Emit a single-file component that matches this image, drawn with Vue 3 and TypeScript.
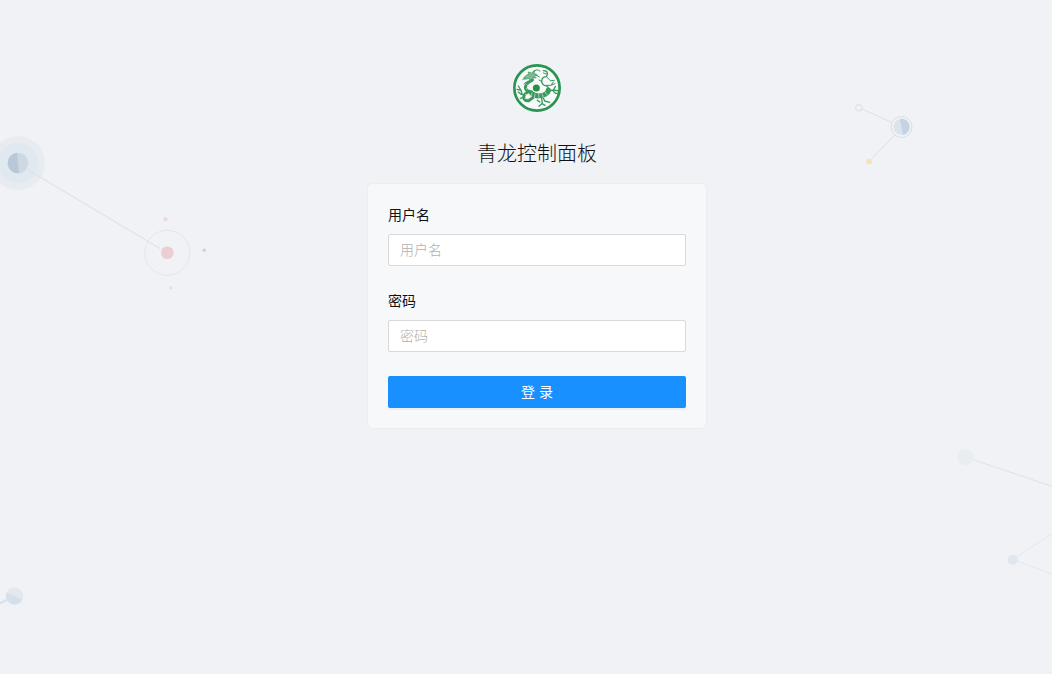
<script setup lang="ts">
import { ref } from 'vue'

const username = ref('')
const password = ref('')
</script>

<template>
  <div class="page">
    <svg class="backdrop" viewBox="0 0 1052 674" preserveAspectRatio="xMinYMin slice" fill="none" aria-hidden="true">
      <g>
        <circle cx="18" cy="163" r="27" fill="#e8ecf0" />
        <circle cx="18" cy="163" r="20" fill="#e0e8f0" />
        <circle cx="18" cy="163" r="10.3" fill="#cdd8e2" />
        <path d="M17 152.700A10.300 10.300 0 1 0 19 173.300Z" fill="#b8c8d8" />
        <path d="M26.500 169L160 248.500" stroke="#d8e0e9" />
        <circle cx="167.300" cy="252.800" r="22.500" stroke="#e3e6eb" />
        <circle cx="167.300" cy="252.800" r="6.300" fill="#ebcdd2" />
        <circle cx="165.500" cy="219.300" r="2.200" fill="#ecdade" />
        <circle cx="170.800" cy="287.700" r="1.700" fill="#eddce1" />
        <circle cx="204.200" cy="250.200" r="1.800" fill="#cad6e3" />
      </g>
      <g>
        <path d="M862 109L892 122.500M894 135.500L871 159.500" stroke="#d8e1e9" />
        <circle cx="858.800" cy="107.800" r="3.200" stroke="#d8e1e9" />
        <circle cx="901.500" cy="127" r="10.500" stroke="#d5e0e9" />
        <circle cx="901.500" cy="127" r="8" fill="#dbe3eb" />
        <path d="M900 119A8 8 0 1 1 903 135Z" fill="#c4d3e1" />
        <circle cx="869" cy="161.500" r="2.800" fill="#f6e2b6" />
      </g>
      <g>
        <circle cx="965.500" cy="457.500" r="8.300" fill="#e9edf1" />
        <path d="M974 460L1054 487" stroke="#dce3ea" />
        <path d="M1016 557L1054 532.500M1017 561L1054 575" stroke="#e3e7ec" />
        <circle cx="1012.700" cy="559.800" r="5" fill="#dfe6ee" />
      </g>
      <g>
        <path d="M-2 604L8 599.500" stroke="#d7e1ea" stroke-width="2" />
        <circle cx="14.500" cy="596" r="8.700" fill="#e2e8ef" />
        <path d="M6.500 592.600A8.700 8.700 0 0 0 22.500 599.400Z" fill="#d7e0ea" />
      </g>
    </svg>

    <main class="content">
      <header class="top">
        <svg class="logo" viewBox="18 18 144 144" fill="none" stroke="#3a9a5c" stroke-linecap="round" stroke-linejoin="round" role="img" aria-label="logo">
          <circle cx="90" cy="90" r="68" fill="#f7f9fa" stroke="#2b9450" stroke-width="8" />
          <path d="M50 59L60 50L66 49L63 42L74 45L84 36L81 46L91 51L82 54L88 60L78 59L80 67L71 71L66 61L55 64Z" fill="#7dba92" stroke-width="2" />
          <path d="M78 42Q88 30 99 39M85 50L97 57M55 60L47 65M62 70L51 77" stroke-width="3" />
          <path d="M75 67Q56 75 55 89Q57 99 69 101" stroke-width="9" />
          <path d="M67 101Q52 105 50 117Q50 129 65 128L79 118" stroke-width="9" />
          <path d="M74 105Q88 119 110 111Q124 106 124 96" stroke-width="15" />
          <path d="M124 98Q127 84 112 82Q101 76 105 64Q108 56 118 56Q125 45 117 39L109 38" stroke-width="4" />
          <circle cx="88" cy="90" r="14" fill="#f5f9f6" stroke="none" />
          <circle cx="88" cy="90" r="10.500" fill="#239149" stroke="none" />
          <path d="M52 110L42 109L34 102M45 108L42 97L30 94M42 97L34 84M48 119L40 121" stroke-width="4" />
          <path d="M124 99L139 96L157 99M137 97L145 106L154 106M139 96L145 86M108 118L113 129L128 133M104 121L106 136L96 145M105 137L114 142M91 127L99 132" stroke-width="4" />
          <path d="M117 82L132 82L139 72M134 81L144 77M105 71L96 66M119 57L130 68L142 67M118 48L109 45" stroke-width="3" />
          <path d="M59 80L66 86M58 92L69 95M55 109L67 112M54 122L64 120M75 105L72 117M84 108L82 121M95 109L96 120M105 107L109 118M115 103L121 112" stroke="#d6e9dc" stroke-width="2" />
        </svg>
        <h1 class="title">青龙控制面板</h1>
      </header>

      <form class="card" @submit.prevent>
        <div class="field">
          <label for="username">用户名</label>
          <input id="username" v-model="username" type="text" placeholder="用户名" autocomplete="username" />
        </div>
        <div class="field">
          <label for="password">密码</label>
          <input id="password" v-model="password" type="password" placeholder="密码" autocomplete="current-password" />
        </div>
        <button type="submit">登 录</button>
      </form>
    </main>
  </div>
</template>

<style>
body {
  margin: 0;
}
</style>

<style scoped>
.page {
  position: relative;
  box-sizing: border-box;
  min-height: 100vh;
  padding: 64px 0 24px 22px;
  overflow: hidden;
  background: #f0f2f5;
  color: #111;
  font-family: "Liberation Sans", "Noto Sans CJK SC", sans-serif;
  font-size: 14px;
  line-height: 22px;
}

.backdrop {
  position: absolute;
  top: 0;
  left: 0;
  width: 100%;
  height: 100%;
}

.content {
  position: relative;
  display: flex;
  flex-direction: column;
  align-items: center;
}

.top {
  display: flex;
  flex-direction: column;
  align-items: center;
  gap: 24px;
  margin-bottom: 11px;
}

.logo {
  display: block;
  width: 48px;
  height: 48px;
}

.title {
  margin: 0;
  font-size: 20px;
  font-weight: 300;
  line-height: 36px;
}

.card {
  box-sizing: border-box;
  width: 100%;
  max-width: 340px;
  padding: 20px;
  border: 1px solid #ebedef;
  border-radius: 6px;
  background: #f7f8fa;
}

.field {
  display: flex;
  flex-direction: column;
  gap: 8px;
  margin-bottom: 24px;
}

label {
  align-self: flex-start;
}

input {
  box-sizing: border-box;
  width: 100%;
  height: 32px;
  padding: 4px 11px;
  border: 1px solid #d9d9d9;
  border-radius: 2px;
  background: #fff;
  color: #222;
  font: inherit;
  font-weight: 300;
}

input::placeholder {
  color: #b0b0b0;
  opacity: 1;
}

input:focus {
  border-color: #40a9ff;
  outline: none;
}

button {
  display: block;
  width: 100%;
  height: 32px;
  padding: 4px 15px;
  border: 0;
  border-radius: 2px;
  background: #1890ff;
  box-shadow: 0 2px 0 rgba(0, 0, 0, 0.04);
  color: #fff;
  font: inherit;
  cursor: pointer;
}
</style>
